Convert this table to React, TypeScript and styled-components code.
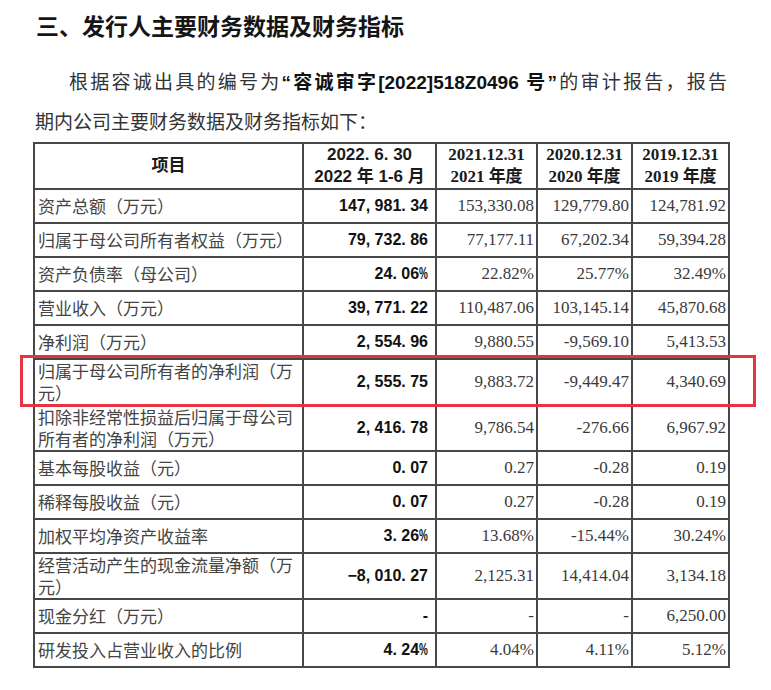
import React from "react";
import styled, { createGlobalStyle } from "styled-components";

const GlobalStyle = createGlobalStyle`
  html, body { margin: 0; padding: 0; background: #ffffff; }
  body { font-family: "Noto Sans CJK SC", sans-serif; color: #222; }
`;

const Page = styled.div`
  width: 771px;
  height: 690px;
  box-sizing: border-box;
  padding: 10px 0 0 33px;
  background: #fff;
`;

const Title = styled.h1`
  margin: 0;
  font-family: "Noto Sans CJK SC", sans-serif;
  font-weight: 700;
  font-size: 23px;
  line-height: 30px;
  color: #151515;
  padding-left: 3px;
`;

const Para = styled.div`
  margin-top: 20px;
  width: 694px;
  font-family: "Noto Sans CJK SC", sans-serif;
  font-size: 19px;
  color: #333;
`;

const ParaFirst = styled.div`
  line-height: 42px;
  text-indent: 36px;
  text-align: justify;
  text-align-last: justify;
  white-space: nowrap;
`;

const ParaLine = styled.div`
  line-height: 34px;
  padding-bottom: 4px;
  padding-left: 2px;
`;

const Strong = styled.span`
  font-family: "Liberation Sans", "Noto Sans CJK SC", sans-serif;
  font-weight: 700;
  color: #111;
`;

const TableWrap = styled.div`
  position: relative;
  width: 695px;
`;

const Table = styled.table`
  border-collapse: collapse;
  table-layout: fixed;
  width: 695px;
  border: 2px solid #474747;
`;

const HeadCell = styled.th<{ $serif?: boolean }>`
  border: 2px solid #474747;
  height: 43px;
  padding: 0;
  text-align: center;
  vertical-align: middle;
  font-weight: 700;
  font-size: 17px;
  line-height: 22px;
  color: #1a1a1a;
  font-family: ${(p) =>
    p.$serif
      ? `"Liberation Serif", "Noto Sans CJK SC", serif`
      : `"Liberation Sans", "Noto Sans CJK SC", sans-serif`};
`;

const LabelCell = styled.td`
  border: 2px solid #474747;
  height: 32px;
  padding: 0 8px 0 3px;
  font-family: "Noto Sans CJK SC", sans-serif;
  font-size: 17px;
  line-height: 22px;
  color: #444;
  vertical-align: middle;
`;

const ValueCell = styled.td<{ $bold?: boolean }>`
  border: 2px solid #474747;
  padding: 0 ${(p) => (p.$bold ? "7px" : "2px")} 0 0;
  text-align: right;
  vertical-align: middle;
  white-space: nowrap;
  font-size: ${(p) => (p.$bold ? "16px" : "17px")};
  line-height: 22px;
  font-weight: ${(p) => (p.$bold ? 700 : 400)};
  color: ${(p) => (p.$bold ? "#111" : "#3a3a3a")};
  font-family: ${(p) =>
    p.$bold
      ? `"Liberation Sans", "Noto Sans CJK SC", sans-serif`
      : `"Liberation Serif", "Noto Sans CJK SC", serif`};
`;

const Punct = styled.span`
  display: inline-block;
  width: 0.556em;
  text-align: left;
`;

const Pct = styled.span`
  display: inline-block;
  width: 0.556em;
  text-align: left;
  transform: scaleX(0.62);
  transform-origin: left center;
`;

const Highlight = styled.div`
  position: absolute;
  left: -13px;
  top: 213px;
  width: 736px;
  height: 52px;
  box-sizing: border-box;
  border: 3px solid #e5333f;
  pointer-events: none;
`;

const MonoNum: React.FC<{ text: string }> = ({ text }) => (
  <>
    {text.split("").map((ch, i) =>
      ch === "," || ch === "." ? (
        <Punct key={i}>{ch}</Punct>
      ) : ch === "%" ? (
        <Pct key={i}>{ch}</Pct>
      ) : (
        <React.Fragment key={i}>{ch}</React.Fragment>
      )
    )}
  </>
);

type Row = { label: string; v: string[] };

const rows: Row[] = [
  { label: "资产总额（万元）", v: ["147,981.34", "153,330.08", "129,779.80", "124,781.92"] },
  { label: "归属于母公司所有者权益（万元）", v: ["79,732.86", "77,177.11", "67,202.34", "59,394.28"] },
  { label: "资产负债率（母公司）", v: ["24.06%", "22.82%", "25.77%", "32.49%"] },
  { label: "营业收入（万元）", v: ["39,771.22", "110,487.06", "103,145.14", "45,870.68"] },
  { label: "净利润（万元）", v: ["2,554.96", "9,880.55", "-9,569.10", "5,413.53"] },
  { label: "归属于母公司所有者的净利润（万元）", v: ["2,555.75", "9,883.72", "-9,449.47", "4,340.69"] },
  { label: "扣除非经常性损益后归属于母公司所有者的净利润（万元）", v: ["2,416.78", "9,786.54", "-276.66", "6,967.92"] },
  { label: "基本每股收益（元）", v: ["0.07", "0.27", "-0.28", "0.19"] },
  { label: "稀释每股收益（元）", v: ["0.07", "0.27", "-0.28", "0.19"] },
  { label: "加权平均净资产收益率", v: ["3.26%", "13.68%", "-15.44%", "30.24%"] },
  { label: "经营活动产生的现金流量净额（万元）", v: ["−8,010.27", "2,125.31", "14,414.04", "3,134.18"] },
  { label: "现金分红（万元）", v: ["-", "-", "-", "6,250.00"] },
  { label: "研发投入占营业收入的比例", v: ["4.24%", "4.04%", "4.11%", "5.12%"] },
];

export default function App() {
  return (
    <>
      <GlobalStyle />
      <Page>
        <Title>三、发行人主要财务数据及财务指标</Title>
        <Para>
          <ParaFirst>
            根据容诚出具的编号为<Strong>“容诚审字[2022]518Z0496 号”</Strong>的审计报告，报告
          </ParaFirst>
          <ParaLine>期内公司主要财务数据及财务指标如下：</ParaLine>
        </Para>
        <TableWrap>
          <Table>
            <colgroup>
              <col style={{ width: 269 }} />
              <col style={{ width: 133 }} />
              <col style={{ width: 101 }} />
              <col style={{ width: 95 }} />
              <col style={{ width: 97 }} />
            </colgroup>
            <thead>
              <tr>
                <HeadCell>项目</HeadCell>
                <HeadCell>
                  <MonoNum text="2022.6.30" />
                  <br />
                  2022 年 1-6 月
                </HeadCell>
                <HeadCell $serif>
                  2021.12.31
                  <br />
                  2021 年度
                </HeadCell>
                <HeadCell $serif>
                  2020.12.31
                  <br />
                  2020 年度
                </HeadCell>
                <HeadCell $serif>
                  2019.12.31
                  <br />
                  2019 年度
                </HeadCell>
              </tr>
            </thead>
            <tbody>
              {rows.map((r) => (
                <tr key={r.label}>
                  <LabelCell>{r.label}</LabelCell>
                  <ValueCell $bold>
                    <MonoNum text={r.v[0]} />
                  </ValueCell>
                  <ValueCell>{r.v[1]}</ValueCell>
                  <ValueCell>{r.v[2]}</ValueCell>
                  <ValueCell>{r.v[3]}</ValueCell>
                </tr>
              ))}
            </tbody>
          </Table>
          <Highlight />
        </TableWrap>
      </Page>
    </>
  );
}
